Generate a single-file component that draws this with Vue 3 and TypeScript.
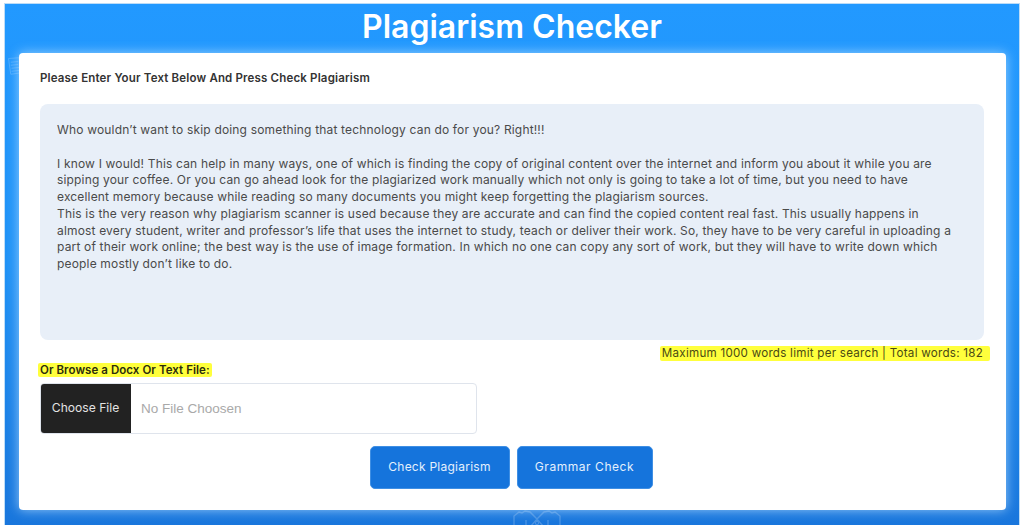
<script setup lang="ts">
const lines: string[] = [
  "Who wouldn’t want to skip doing something that technology can do for you? Right!!!",
  "\u00a0",
  "I know I would! This can help in many ways, one of which is finding the copy of original content over the internet and inform you about it while you are",
  "sipping your coffee. Or you can go ahead look for the plagiarized work manually which not only is going to take a lot of time, but you need to have",
  "excellent memory because while reading so many documents you might keep forgetting the plagiarism sources.",
  "This is the very reason why plagiarism scanner is used because they are accurate and can find the copied content real fast. This usually happens in",
  "almost every student, writer and professor’s life that uses the internet to study, teach or deliver their work. So, they have to be very careful in uploading a",
  "part of their work online; the best way is the use of image formation. In which no one can copy any sort of work, but they will have to write down which",
  "people mostly don’t like to do.",
];
</script>

<template>
  <div class="page">
    <main class="frame">
      <svg class="deco deco-doc" viewBox="0 0 20 24" aria-hidden="true">
        <path d="M2 2l14-1 3 20-14 2z M5 7l10-1 M5 11l10-1 M6 15l10-1 M6 19l10-1" fill="none" stroke="#fff" stroke-width="1.2" />
      </svg>
      <svg class="deco deco-gear" viewBox="0 0 48 17" aria-hidden="true">
        <path d="M1 17V7l5-4 3 1 3-2 5 1 7 7 7-7 5-1 3 2 3-1 5 4v10 M13 17v-6 M35 17v-6 M18 17l6-7 6 7" fill="none" stroke="#fff" stroke-width="1.4" />
        <circle cx="24" cy="14" r="1.6" fill="none" stroke="#fff" stroke-width="1.1" />
      </svg>
      <h1 class="title">Plagiarism Checker</h1>
      <section class="card">
        <p class="intro">Please Enter Your Text Below And Press Check Plagiarism</p>
        <div class="text-box">
          <div v-for="(line, i) in lines" :key="i" class="line">{{ line }}</div>
        </div>
        <div class="limit-row">
          <span class="limit mark">Maximum 1000 words limit per search | Total words: 182</span>
        </div>
        <div class="browse"><span class="mark">Or Browse a Docx Or Text File:</span></div>
        <div class="file">
          <div class="choose">Choose File</div>
          <div class="none">No File Choosen</div>
        </div>
        <div class="actions">
          <button class="btn btn-check" type="button">Check Plagiarism</button>
          <button class="btn btn-grammar" type="button">Grammar Check</button>
        </div>
      </section>
    </main>
  </div>
</template>

<style>
html, body { margin: 0; background: #fff; }
</style>

<style scoped>
.page {
  width: 1024px;
  height: 528px;
  padding: 3px 4px;
  box-sizing: border-box;
  font-family: "Inter", "Liberation Sans", sans-serif;
  color: #333;
  overflow: hidden;
}
.frame {
  position: relative;
  width: 100%;
  height: 522px;
  padding: 0 14px;
  box-sizing: border-box;
  display: flex;
  flex-direction: column;
  align-items: stretch;
  background: linear-gradient(180deg, #2299ff 0%, #2092f6 50%, #1976dc 100%);
  border: 1px solid #bcdcf7;
  border-bottom: 0;
  overflow: hidden;
}
.deco { position: absolute; opacity: 0.2; }
.deco-doc { left: 2px; top: 51px; width: 15px; height: 22px; }
.deco-gear { left: 508px; top: 505px; width: 48px; height: 17px; }
.title {
  margin: 0;
  height: 49px;
  line-height: 46px;
  text-align: center;
  font-size: 32px;
  font-weight: 600;
  color: #fff;
}
.card {
  position: relative;
  width: 987px;
  height: 457px;
  padding: 0 22px 0 21px;
  box-sizing: border-box;
  display: flex;
  flex-direction: column;
  background: #fff;
  border-radius: 4px;
  box-shadow: 0 0 12px rgba(190, 225, 255, 0.75);
}
.intro {
  margin: 0;
  padding-top: 18px;
  height: 51px;
  box-sizing: border-box;
  line-height: 15px;
  font-size: 11.5px;
  letter-spacing: 0.17px;
  font-weight: 600;
  color: #333;
}
.text-box {
  height: 236px;
  padding: 18px 17px;
  box-sizing: border-box;
  background: #e8eff8;
  border-radius: 8px;
  font-size: 12px;
  letter-spacing: 0.17px;
  line-height: 16.75px;
  color: #4a4a4a;
}
.line { white-space: nowrap; }
.mark {
  background: #ffff3c;
  border-radius: 2px;
  color: #4a4a14;
}
.limit-row {
  height: 20px;
  display: flex;
  justify-content: flex-end;
  align-items: center;
  margin-right: -6px;
  padding-top: 7px;
  box-sizing: border-box;
}
.limit {
  padding: 1px 7px 1px 2px;
  font-size: 11.6px;
  letter-spacing: 0.26px;
  line-height: 13px;
  white-space: nowrap;
}
.browse {
  height: 23px;
  margin-left: -2px;
  padding-bottom: 3px;
  box-sizing: border-box;
  font-size: 11.5px;
  letter-spacing: 0.06px;
  font-weight: 600;
  line-height: 14px;
  display: flex;
  align-items: center;
}
.browse .mark { padding: 0 2px; color: #2c2c0c; }
.file {
  width: 437px;
  height: 51px;
  display: flex;
  box-sizing: border-box;
  border: 1px solid #dfe4ec;
  border-radius: 4px;
  overflow: hidden;
}
.choose {
  width: 91px;
  margin: -1px 0 -1px -1px;
  padding-bottom: 3px;
  box-sizing: content-box;
  height: 48px;
  display: flex;
  align-items: center;
  justify-content: center;
  background: #222;
  color: #e3e3e3;
  font-size: 12.1px;
  font-weight: 400;
}
.none {
  flex: 1;
  display: flex;
  align-items: center;
  padding-left: 10px;
  padding-bottom: 1px;
  font-family: "Liberation Sans", Arial, sans-serif;
  font-size: 13.5px;
  color: #a9a9a9;
}
.actions {
  margin-top: 12px;
  display: flex;
  justify-content: center;
  gap: 7px;
  margin-left: -2px;
}
.btn {
  height: 43px;
  padding: 0 0 2px;
  border: 1px solid #3f8fe4;
  border-radius: 5px;
  background: #1574dc;
  color: #e4f0fc;
  font-family: inherit;
  font-size: 12px;
  letter-spacing: 0.25px;
  font-weight: 400;
}
.btn-check { width: 140px; }
.btn-grammar { width: 136px; letter-spacing: 0.55px; }
</style>
